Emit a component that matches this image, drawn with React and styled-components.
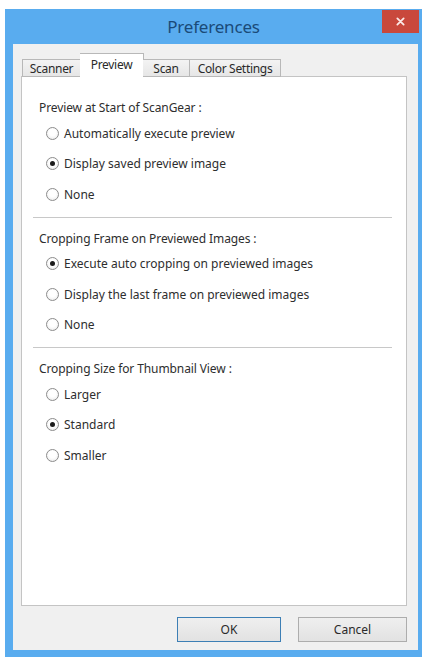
import React from "react";
import styled, { createGlobalStyle } from "styled-components";

const GlobalStyle = createGlobalStyle`
  body {
    margin: 0;
    background: #ffffff;
    font-family: "Noto Sans", "Open Sans", sans-serif;
  }
`;

const Window = styled.div`
  margin: 9px 0 0 5px;
  width: 417px;
  height: 648px;
  background: #59acef;
  display: flex;
  flex-direction: column;
  box-sizing: border-box;
`;

const TitleBar = styled.div`
  height: 35px;
  display: grid;
  grid-template-columns: 37px 1fr 37px;
  padding: 0 3px;
  align-items: start;
`;

const Title = styled.div`
  grid-column: 2;
  text-align: center;
  font-size: 17px;
  line-height: 35px;
  color: #1a4a78;
  letter-spacing: -0.2px;
`;

const CloseButton = styled.div`
  grid-column: 3;
  margin-top: 1px;
  width: 37px;
  height: 23px;
  background: #c9483c;
  display: flex;
  align-items: center;
  justify-content: center;
`;

const Client = styled.div`
  flex: 1;
  margin: 0 4px 7px 8px;
  background: #f0f0f0;
  padding: 9px 11px 8px 8px;
  display: flex;
  flex-direction: column;
  box-sizing: border-box;
`;

const TabRow = styled.div`
  display: flex;
  align-items: flex-end;
  padding-left: 1px;
  height: 24px;
  position: relative;
  z-index: 1;
  margin-bottom: -1px;
`;

const Tab = styled.div`
  width: ${(p) => p.$w}px;
  height: ${(p) => (p.$active ? 24 : 18)}px;
  box-sizing: border-box;
  border: 1px solid #b8b8b8;
  border-bottom: ${(p) => (p.$active ? "none" : "1px solid #b8b8b8")};
  margin-left: ${(p) => (p.$active ? "-1px" : "0")};
  margin-right: ${(p) => (p.$active ? "-1px" : "0")};
  background: ${(p) =>
    p.$active ? "#ffffff" : "linear-gradient(#f3f3f3, #e6e6e6)"};
  font-size: 12px;
  color: #2a2a2a;
  display: flex;
  justify-content: center;
  align-items: ${(p) => (p.$active ? "flex-start" : "center")};
  padding-top: ${(p) => (p.$active ? "2px" : "0")};
  letter-spacing: -0.3px;
  & + & {
    border-left: ${(p) => (p.$active ? "1px solid #b8b8b8" : "none")};
  }
`;

const Panel = styled.div`
  flex: 1;
  background: #ffffff;
  border: 1px solid #c4c4c4;
  padding: 23px 14px 0 11px;
  box-sizing: border-box;
`;

const Section = styled.div`
  padding-left: 6px;
`;

const SectionTitle = styled.div`
  font-size: 12px;
  line-height: 16px;
  color: #2e2e2e;
  letter-spacing: -0.1px;
`;

const Options = styled.div`
  margin: 2px 0 0 7px;
`;

const Option = styled.label`
  height: 30.5px;
  display: flex;
  align-items: center;
  gap: 5px;
  font-size: 12px;
  color: #2e2e2e;
`;

const Radio = styled.span`
  width: 13px;
  height: 13px;
  box-sizing: border-box;
  border-radius: 50%;
  border: 1px solid #8c8c8c;
  background: radial-gradient(circle at 50% 40%, #ffffff 40%, #e4e4e4 100%);
  display: flex;
  align-items: center;
  justify-content: center;
  flex-shrink: 0;
  &::after {
    content: "";
    width: 5px;
    height: 5px;
    border-radius: 50%;
    background: #1a1a1a;
    display: ${(p) => (p.$checked ? "block" : "none")};
  }
`;

const Separator = styled.div`
  height: 1px;
  background: #c8c8c8;
  margin: 7px 0 13px;
`;

const Footer = styled.div`
  display: flex;
  justify-content: flex-end;
  gap: 17px;
  margin-top: 11px;
`;

const Button = styled.div`
  width: ${(p) => p.$w}px;
  height: 25px;
  box-sizing: border-box;
  border: 1px solid ${(p) => (p.$primary ? "#3d7fb5" : "#adadad")};
  background: linear-gradient(#efefef, #e2e2e2);
  font-size: 12px;
  color: #2a2a2a;
  display: flex;
  align-items: center;
  justify-content: center;
`;

const sections = [
  {
    title: "Preview at Start of ScanGear :",
    options: [
      "Automatically execute preview",
      "Display saved preview image",
      "None",
    ],
    checked: 1,
  },
  {
    title: "Cropping Frame on Previewed Images :",
    options: [
      "Execute auto cropping on previewed images",
      "Display the last frame on previewed images",
      "None",
    ],
    checked: 0,
  },
  {
    title: "Cropping Size for Thumbnail View :",
    options: ["Larger", "Standard", "Smaller"],
    checked: 1,
  },
];

const tabs = [
  { label: "Scanner", w: 59 },
  { label: "Preview", w: 64, active: true },
  { label: "Scan", w: 47 },
  { label: "Color Settings", w: 91 },
];

export default function App() {
  return (
    <>
      <GlobalStyle />
      <Window>
        <TitleBar>
          <Title>Preferences</Title>
          <CloseButton>
            <svg width="9" height="9" viewBox="0 0 10 10">
              <path
                d="M1.5 1.5 L8.5 8.5 M8.5 1.5 L1.5 8.5"
                stroke="#fbe9e7"
                strokeWidth="2"
                strokeLinecap="round"
              />
            </svg>
          </CloseButton>
        </TitleBar>
        <Client>
          <TabRow>
            {tabs.map((t) => (
              <Tab key={t.label} $w={t.w} $active={t.active}>
                {t.label}
              </Tab>
            ))}
          </TabRow>
          <Panel>
            {sections.map((s, i) => (
              <React.Fragment key={s.title}>
                {i > 0 && <Separator />}
                <Section>
                  <SectionTitle>{s.title}</SectionTitle>
                  <Options>
                    {s.options.map((o, j) => (
                      <Option key={o}>
                        <Radio $checked={j === s.checked} />
                        {o}
                      </Option>
                    ))}
                  </Options>
                </Section>
              </React.Fragment>
            ))}
          </Panel>
          <Footer>
            <Button $w={104} $primary>
              OK
            </Button>
            <Button $w={109}>Cancel</Button>
          </Footer>
        </Client>
      </Window>
    </>
  );
}
